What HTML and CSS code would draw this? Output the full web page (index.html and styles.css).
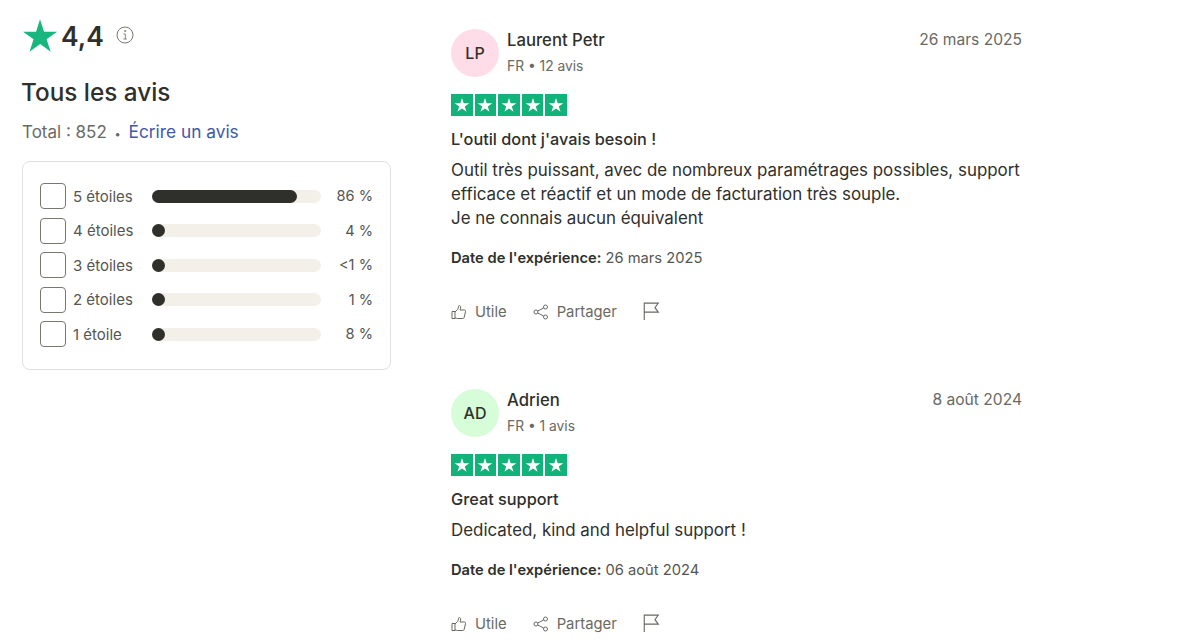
FILE: index.html
```html
<!DOCTYPE html>
<html lang="fr">
<head>
<meta charset="utf-8">
<title>Tous les avis</title>
<link rel="stylesheet" href="styles.css">
</head>
<body>
<svg class="defs" width="0" height="0" aria-hidden="true">
  <defs>
    <symbol id="star" viewBox="0 0 24 24"><path d="M12 1.5l2.6 7.9H23l-6.8 4.9 2.6 8L12 17.4l-6.8 4.9 2.6-8L1 9.4h8.4z"/></symbol>
    <symbol id="thumb" viewBox="0 0 16 16"><path d="M1 7.500h3v7H1zM4 8l2.600-2.600c.6-.8.9-1.600.9-3.100 0-1 1.900-1 2.200.4.200 1-.2 2.300-.7 3.300h4.300c1 0 1.400.8 1.200 1.600l-1.300 5.700c-.2.800-.7 1.200-1.400 1.200H6.500c-1 0-1.500-.5-2.500-.5" fill="none" stroke="currentColor" stroke-width="1"/></symbol>
    <symbol id="share" viewBox="0 0 16 16"><g fill="none" stroke="currentColor" stroke-width="1"><circle cx="3" cy="8" r="2"/><circle cx="12.500" cy="3" r="2"/><circle cx="12.500" cy="13" r="2"/><path d="M4.800 7l5.900-3.100M4.800 9l5.900 3.100"/></g></symbol>
    <symbol id="flag" viewBox="0 0 16 16"><path d="M2 16V1h12.500l-3 4 3 4H2" fill="none" stroke="currentColor" stroke-width="1"/></symbol>
  </defs>
</svg>
<div class="page">
  <aside class="side">
    <div class="score">
      <svg class="score-star" viewBox="0 0 24 24"><path d="M12 .8l2.700 8.300h8.700l-7 5.100 2.700 8.300-7-5.100-7.100 5.100 2.700-8.300-7-5.100h8.700z"/></svg>
      <span class="score-value">4,4</span>
      <svg class="info" viewBox="0 0 18 18"><circle cx="9" cy="9" r="8" fill="none" stroke="currentColor"/><path d="M7.500 8h1.800v5M7.300 13h3.600M8.700 4.500h1v1h-1z" fill="none" stroke="currentColor" stroke-width=".9"/></svg>
    </div>
    <h1 class="side-title">Tous les avis</h1>
    <p class="total">Total : 852 <span class="dot">•</span> <a class="write" href="#">Écrire un avis</a></p>
    <div class="dist">
      <div class="dist-row"><span class="check"></span><span class="dist-label">5 étoiles</span><span class="track"><span class="fill" style="width:145px"></span></span><span class="pct">86 %</span></div>
      <div class="dist-row"><span class="check"></span><span class="dist-label">4 étoiles</span><span class="track"><span class="fill" style="width:13px"></span></span><span class="pct">4 %</span></div>
      <div class="dist-row"><span class="check"></span><span class="dist-label">3 étoiles</span><span class="track"><span class="fill" style="width:13px"></span></span><span class="pct">&lt;1 %</span></div>
      <div class="dist-row"><span class="check"></span><span class="dist-label">2 étoiles</span><span class="track"><span class="fill" style="width:13px"></span></span><span class="pct">1 %</span></div>
      <div class="dist-row"><span class="check"></span><span class="dist-label">1 étoile</span><span class="track"><span class="fill" style="width:13px"></span></span><span class="pct">8 %</span></div>
    </div>
  </aside>
  <main class="reviews">
    <article class="review">
      <header class="head">
        <span class="avatar pink">LP</span>
        <div class="who">
          <div class="name">Laurent Petr</div>
          <div class="meta">FR • 12 avis</div>
        </div>
        <time class="date">26 mars 2025</time>
      </header>
      <div class="stars">
        <span class="s"><svg><use href="#star"/></svg></span><span class="s"><svg><use href="#star"/></svg></span><span class="s"><svg><use href="#star"/></svg></span><span class="s"><svg><use href="#star"/></svg></span><span class="s"><svg><use href="#star"/></svg></span>
      </div>
      <h2 class="title">L'outil dont j'avais besoin !</h2>
      <p class="body">Outil très puissant, avec de nombreux paramétrages possibles, support<br>efficace et réactif et un mode de facturation très souple.<br>Je ne connais aucun équivalent</p>
      <p class="exp"><b>Date de l'expérience:</b> 26 mars 2025</p>
      <div class="actions">
        <span class="act"><svg class="ic"><use href="#thumb"/></svg>Utile</span>
        <span class="act"><svg class="ic"><use href="#share"/></svg>Partager</span>
        <svg class="ic-flag"><use href="#flag"/></svg>
      </div>
    </article>
    <article class="review">
      <header class="head">
        <span class="avatar green">AD</span>
        <div class="who">
          <div class="name">Adrien</div>
          <div class="meta">FR • 1 avis</div>
        </div>
        <time class="date">8 août 2024</time>
      </header>
      <div class="stars">
        <span class="s"><svg><use href="#star"/></svg></span><span class="s"><svg><use href="#star"/></svg></span><span class="s"><svg><use href="#star"/></svg></span><span class="s"><svg><use href="#star"/></svg></span><span class="s"><svg><use href="#star"/></svg></span>
      </div>
      <h2 class="title">Great support</h2>
      <p class="body">Dedicated, kind and helpful support !</p>
      <p class="exp"><b>Date de l'expérience:</b> 06 août 2024</p>
      <div class="actions">
        <span class="act"><svg class="ic"><use href="#thumb"/></svg>Utile</span>
        <span class="act"><svg class="ic"><use href="#share"/></svg>Partager</span>
        <svg class="ic-flag"><use href="#flag"/></svg>
      </div>
    </article>
  </main>
</div>
</body>
</html>
```
FILE: styles.css
```css
* { box-sizing: border-box; }
html, body { margin: 0; padding: 0; height: 642px; overflow: hidden; background: #fff; }
body { font-family: Inter, "Noto Sans", sans-serif; color: #2f302b; }
.defs { position: absolute; }
.page { display: flex; padding-left: 22px; }
.side { width: 369px; flex: none; padding-top: 18px; }
.score { display: flex; align-items: center; height: 36px; }
.score-star { width: 36px; height: 36px; fill: #19b77f; flex: none; }
.score-value { font-size: 26.500px; font-weight: 600; margin-left: 3px; line-height: 36px; }
.info { width: 18px; height: 18px; color: #77786f; margin-left: 12px; margin-bottom: 2px; }
.side-title { font-size: 24.300px; font-weight: 500; margin: 20px 0 0 -1px; line-height: 36px; }
.total { margin: 10px 0 0; font-size: 17px; line-height: 24px; color: #696a63; }
.dot { margin: 0 3px; font-size: 11px; }
.write { color: #4258a5; text-decoration: none; font-size: 17.300px; }
.dist { margin-top: 15px; height: 209px; border: 1px solid #dfdfdc; border-radius: 8px; padding: 21px 17px 0; display: flex; flex-direction: column; gap: 8.500px; }
.dist-row { display: flex; align-items: center; height: 26px; font-size: 15px; color: #55564f; }
.check { width: 26px; height: 26px; border: 1px solid #77786f; border-radius: 4px; flex: none; }
.dist-label { width: 79px; margin-left: 7px; flex: none; }
.track { width: 169px; height: 13px; background: #f3f0ea; border-radius: 7px; flex: none; display: block; }
.fill { display: block; height: 13px; background: #2f302b; border-radius: 7px; }
.pct { flex: 1; text-align: right; font-size: 14.600px; }
.reviews { width: 571px; margin-left: 60px; padding-top: 29px; flex: none; }
.review { height: 360px; }
.head { display: flex; align-items: flex-start; }
.avatar { width: 48px; height: 48px; border-radius: 50%; display: flex; align-items: center; justify-content: center; font-size: 16px; font-weight: 500; flex: none; }
.pink { background: #ffdde8; }
.green { background: #d6fcd8; }
.who { margin-left: 8px; flex: 1; margin-top: -1px; }
.name { font-size: 16.700px; font-weight: 500; line-height: 24px; }
.meta { font-size: 13.800px; line-height: 20px; margin-top: 4px; color: #696a63; }
.date { font-size: 15.600px; line-height: 20px; margin-top: 1px; color: #696a63; }
.stars { display: flex; gap: 2px; margin-top: 17px; }
.s { width: 21.600px; height: 22px; background: #12b27b; display: flex; align-items: center; justify-content: center; }
.s svg { width: 16px; height: 16px; fill: #fff; }
.title { font-size: 16.300px; font-weight: 500; line-height: 24px; margin: 11px 0 0; }
.body { font-size: 16.900px; line-height: 24px; margin: 7px 0 0; }
.exp { font-size: 14.700px; line-height: 20px; margin: 18px 0 0; color: #55564f; }
.exp b { font-weight: 600; color: #2f302b; }
.actions { display: flex; align-items: center; gap: 26px; margin-top: 35px; font-size: 14.800px; color: #696a63; }
.act { display: flex; align-items: center; gap: 8px; }
.ic { width: 16px; height: 16px; color: #696a63; flex: none; }
.ic-flag { width: 18px; height: 18px; color: #696a63; flex: none; margin-left: -1px; margin-top: -2px; }
```
